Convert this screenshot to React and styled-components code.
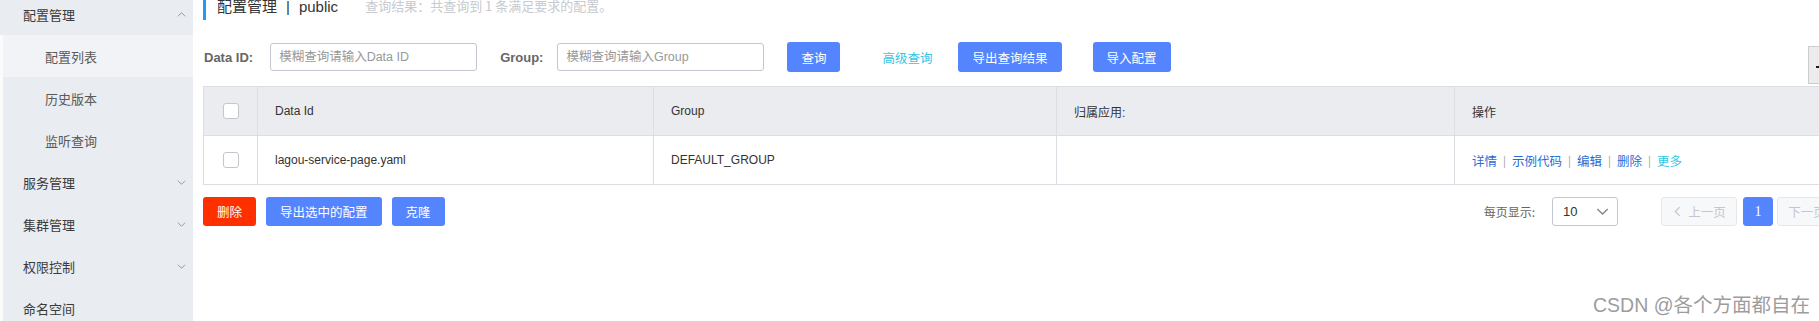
import styled, { createGlobalStyle } from 'styled-components';

const GlobalStyle = createGlobalStyle`
  html, body {
    margin: 0;
    padding: 0;
    background: #ffffff;
    overflow: hidden;
  }
  body {
    font-family: "Liberation Sans", "Noto Sans CJK SC", sans-serif;
  }
  * {
    box-sizing: border-box;
  }
`;

const Chevron = ({ dir = 'down', size = 9, color = '#999' }) => {
  const paths = {
    down: 'M1 3 L5 7 L9 3',
    up: 'M1 7 L5 3 L9 7',
    left: 'M7 1 L3 5 L7 9',
    right: 'M3 1 L7 5 L3 9',
  };
  return (
    <svg width={size} height={size} viewBox="0 0 10 10">
      <path d={paths[dir]} fill="none" stroke={color} strokeWidth="1.1" />
    </svg>
  );
};

const menu = [
  { label: '配置管理', arrow: 'up' },
  { label: '配置列表', sub: true, active: true },
  { label: '历史版本', sub: true },
  { label: '监听查询', sub: true },
  { label: '服务管理', arrow: 'down' },
  { label: '集群管理', arrow: 'down' },
  { label: '权限控制', arrow: 'down' },
  { label: '命名空间' },
];

const columns = ['54px', '396px', '403px', '398px', '1fr'];

const App = () => {
  const [first, ...rest] = menu;

  return (
    <Page>
      <GlobalStyle />

      <Sidebar>
        <MenuItem>
          {first.label}
          <Chevron dir={first.arrow} />
        </MenuItem>
        <MenuList>
          {rest.map((m) => (
            <MenuItem key={m.label} sub={m.sub} active={m.active} inList>
              {m.label}
              {m.arrow && <Chevron dir={m.arrow} />}
            </MenuItem>
          ))}
        </MenuList>
      </Sidebar>

      <Main>
        <TitleBar>
          <Title>
            配置管理<Sep>|</Sep>public
          </Title>
          <Info>查询结果：共查询到 1 条满足要求的配置。</Info>
        </TitleBar>

        <FilterRow>
          <Label mr={17}>Data ID:</Label>
          <Input placeholder="模糊查询请输入Data ID" mr={22} />
          <Label mr={14}>Group:</Label>
          <Input placeholder="模糊查询请输入Group" mr={23} />
          <Button mr={42}>查询</Button>
          <TextLink mr={26}>高级查询</TextLink>
          <Button mr={31}>导出查询结果</Button>
          <Button>导入配置</Button>
        </FilterRow>

        <Table>
          <Row header>
            <Cell center><Checkbox /></Cell>
            <Cell>Data Id</Cell>
            <Cell>Group</Cell>
            <Cell>归属应用:</Cell>
            <Cell last>操作</Cell>
          </Row>
          <Row>
            <Cell center><Checkbox /></Cell>
            <Cell>lagou-service-page.yaml</Cell>
            <Cell>DEFAULT_GROUP</Cell>
            <Cell />
            <Cell last>
              <Actions>
                <ActionLink>详情</ActionLink>
                <Divider>|</Divider>
                <ActionLink>示例代码</ActionLink>
                <Divider>|</Divider>
                <ActionLink>编辑</ActionLink>
                <Divider>|</Divider>
                <ActionLink>删除</ActionLink>
                <Divider>|</Divider>
                <ActionLink more>更多</ActionLink>
              </Actions>
            </Cell>
          </Row>
        </Table>

        <BottomRow>
          <ButtonGroup>
            <Button danger small>删除</Button>
            <Button small>导出选中的配置</Button>
            <Button small>克隆</Button>
          </ButtonGroup>

          <Pagination>
            <PageSizeLabel>每页显示:</PageSizeLabel>
            <Select>
              10
              <Chevron dir="down" size={13} color="#888" />
            </Select>
            <PageButton disabled mr={6}>
              <Chevron dir="left" size={11} color="#c4c6cf" />
              上一页
            </PageButton>
            <PageButton current mr={4}>1</PageButton>
            <PageButton disabled>
              下一页
              <Chevron dir="right" size={11} color="#c4c6cf" />
            </PageButton>
          </Pagination>
        </BottomRow>
      </Main>

      <SideTool>
        <Dash />
      </SideTool>

      <Watermark>CSDN @各个方面都自在</Watermark>
    </Page>
  );
};

export default App;

const Page = styled.div`
  position: relative;
  display: flex;
  width: 1819px;
  height: 321px;
  overflow: hidden;
`;

const Sidebar = styled.div`
  flex-shrink: 0;
  width: 193px;
  margin-top: -7px;
  background: #e9ecf0;
  font-family: "Noto Sans CJK SC", sans-serif;
`;

const MenuList = styled.div`
  border-left: 3px solid #fbfbfc;
`;

const MenuItem = styled.div`
  display: flex;
  align-items: center;
  justify-content: space-between;
  height: 42px;
  padding-left: ${({ sub, inList }) => (sub ? '42px' : inList ? '20px' : '23px')};
  padding-right: 7px;
  font-size: 13px;
  color: ${({ sub }) => (sub ? '#5a5a5a' : '#3a3a3a')};
  background: ${({ active }) => (active ? '#f2f3f7' : 'transparent')};

  svg {
    margin-top: 1px;
  }
`;

const Main = styled.div`
  flex: 1;
  padding-left: 10px;
`;

const TitleBar = styled.div`
  display: flex;
  align-items: center;
  height: 30px;
  margin-top: -10px;
  padding-left: 11px;
  border-left: 3px solid #209bfa;
`;

const Title = styled.div`
  font-family: "Liberation Sans", "Noto Sans CJK SC", sans-serif;
  font-size: 15px;
  color: #333;
`;

const Sep = styled.span`
  margin: 0 9px;
`;

const Info = styled.span`
  margin-left: 27px;
  font-family: "Noto Sans CJK SC", sans-serif;
  font-size: 13px;
  color: #c7cad0;
`;

const FilterRow = styled.div`
  display: flex;
  align-items: center;
  height: 30px;
  margin-top: 22px;
`;

const Label = styled.span`
  margin-left: 1px;
  margin-right: ${({ mr }) => mr}px;
  font-size: 13px;
  font-weight: bold;
  color: #666;
`;

const Input = styled.input`
  width: 207px;
  height: 28px;
  margin-right: ${({ mr }) => mr}px;
  padding: 0 8px;
  border: 1px solid #c4c6cf;
  border-radius: 3px;
  outline: none;
  font-family: "Liberation Sans", "Noto Sans CJK SC", sans-serif;
  font-size: 12.5px;
  color: #333;

  &::placeholder {
    color: #999;
  }
`;

const Button = styled.div`
  display: flex;
  align-items: center;
  justify-content: center;
  height: ${({ small }) => (small ? '29px' : '30px')};
  margin-right: ${({ mr }) => mr || 0}px;
  padding: 0 14px;
  border-radius: 3px;
  background: ${({ danger }) => (danger ? '#ff3000' : '#5584ff')};
  color: #fff;
  font-family: "Noto Sans CJK SC", sans-serif;
  font-size: 12.5px;
`;

const TextLink = styled.span`
  margin-right: ${({ mr }) => mr}px;
  font-family: "Noto Sans CJK SC", sans-serif;
  font-size: 12.5px;
  color: #33c5e3;
`;

const Table = styled.div`
  width: 1650px;
  margin-top: 14px;
  border-top: 1px solid #dcdee3;
  border-left: 1px solid #dcdee3;
  border-right: 1px solid #dcdee3;
`;

const Row = styled.div`
  display: grid;
  grid-template-columns: ${columns.join(' ')};
  height: 49px;
  border-bottom: 1px solid #dcdee3;
  background: ${({ header }) => (header ? '#ebecf0' : '#fff')};
`;

const Cell = styled.div`
  display: flex;
  align-items: center;
  justify-content: ${({ center }) => (center ? 'center' : 'flex-start')};
  padding-left: ${({ center }) => (center ? '0' : '17px')};
  border-right: ${({ last }) => (last ? 'none' : '1px solid #dcdee3')};
  font-family: "Liberation Sans", "Noto Sans CJK SC", sans-serif;
  font-size: 12px;
  color: #333;
`;

const Checkbox = styled.span`
  display: block;
  width: 16px;
  height: 16px;
  border: 1px solid #c4c6cf;
  border-radius: 3px;
  background: #fff;
`;

const Actions = styled.div`
  display: flex;
  align-items: center;
  font-family: "Noto Sans CJK SC", sans-serif;
  font-size: 12.5px;
`;

const ActionLink = styled.span`
  color: ${({ more }) => (more ? '#33c5e3' : '#2a6dd1')};
`;

const Divider = styled.span`
  margin: 0 6px;
  color: #999;
  font-size: 11px;
`;

const BottomRow = styled.div`
  display: flex;
  align-items: center;
  width: 1650px;
  margin-top: 12px;
`;

const ButtonGroup = styled.div`
  display: flex;
  gap: 10px;
`;

const Pagination = styled.div`
  display: flex;
  align-items: center;
  margin-left: auto;
`;

const PageSizeLabel = styled.span`
  margin-right: 17px;
  font-family: "Noto Sans CJK SC", sans-serif;
  font-size: 12px;
  color: #666;
`;

const Select = styled.div`
  display: flex;
  align-items: center;
  justify-content: space-between;
  width: 66px;
  height: 29px;
  margin-right: 43px;
  padding: 0 8px 0 10px;
  border: 1px solid #c4c6cf;
  border-radius: 3px;
  font-size: 13px;
  color: #333;
`;

const PageButton = styled.div`
  display: flex;
  align-items: center;
  justify-content: center;
  gap: 5px;
  width: ${({ current }) => (current ? '30px' : '76px')};
  height: 29px;
  margin-right: ${({ mr }) => mr || 0}px;
  border: 1px solid ${({ current }) => (current ? '#5584ff' : '#e6e7eb')};
  border-radius: 3px;
  background: ${({ current }) => (current ? '#5584ff' : '#f7f8fa')};
  color: ${({ current }) => (current ? '#fff' : '#c4c6cf')};
  font-family: ${({ current }) => (current ? '"Liberation Serif", serif' : '"Noto Sans CJK SC", sans-serif')};
  font-size: ${({ current }) => (current ? '14px' : '12.5px')};
`;

const SideTool = styled.div`
  position: absolute;
  left: 1808px;
  top: 46px;
  width: 22px;
  height: 38px;
  border: 1px solid #cccccc;
  background: #ececec;
`;

const Dash = styled.span`
  position: absolute;
  left: 7px;
  top: 19px;
  width: 5px;
  height: 2px;
  background: #1a1a1a;
`;

const Watermark = styled.div`
  position: absolute;
  right: 9px;
  top: 293px;
  font-family: "Liberation Sans", "Noto Sans CJK SC", sans-serif;
  font-size: 19.5px;
  line-height: 24px;
  color: #9d9d9d;
  text-shadow: 0 0 1px rgba(255, 255, 255, 0.9);
`;
